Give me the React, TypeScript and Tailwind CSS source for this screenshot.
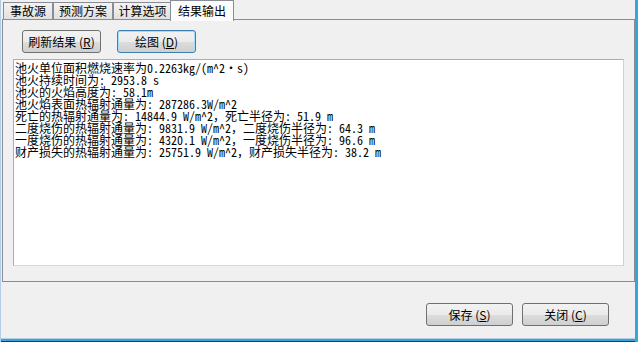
import React from "react";

const lines = [
  "池火单位面积燃烧速率为0.2263kg/(m^2·s)",
  "池火持续时间为: 2953.8 s",
  "池火的火焰高度为: 58.1m",
  "池火焰表面热辐射通量为: 287286.3W/m^2",
  "死亡的热辐射通量为: 14844.9 W/m^2，死亡半径为: 51.9 m",
  "二度烧伤的热辐射通量为: 9831.9 W/m^2，二度烧伤半径为: 64.3 m",
  "一度烧伤的热辐射通量为: 4320.1 W/m^2，一度烧伤半径为: 96.6 m",
  "财产损失的热辐射通量为: 25751.9 W/m^2，财产损失半径为: 38.2 m",
];

const uiFont = { fontFamily: '"Noto Sans CJK SC", "Liberation Sans", sans-serif' };
const monoFont = {
  fontFamily: '"Noto Sans Mono CJK SC", "Noto Sans CJK SC", monospace',
};

function Tab({ label, w, selected }: { label: string; w: string; selected?: boolean }) {
  if (selected) {
    return (
      <div
        className={`${w} h-[21px] -ml-[2px] -mb-[1px] relative z-10 flex items-center justify-center border border-b-0 border-[#898c95] bg-[#fcfcfc] text-[12px] text-black`}
      >
        {label}
      </div>
    );
  }
  return (
    <div
      className={`${w} h-[17px] mt-[2px] flex items-center justify-center border border-b-0 border-[#898c95] bg-gradient-to-b from-[#f3f3f3] to-[#e0e0e0] text-[12px] text-black`}
    >
      {label}
    </div>
  );
}

function Btn({
  children,
  w,
  focused,
}: {
  children: React.ReactNode;
  w: string;
  focused?: boolean;
}) {
  return (
    <div
      className={`${w} h-[23px] rounded-[3px] border ${
        focused ? "border-[#3c7fb1] shadow-[inset_0_0_0_1px_#a6dcf6]" : "border-[#707070]"
      } flex items-center justify-center text-[12px] text-black bg-[linear-gradient(to_bottom,#f2f2f2_0%,#ebebeb_50%,#dddddd_51%,#cfcfcf_100%)]`}
    >
      {children}
    </div>
  );
}

export default function App() {
  return (
    <div
      className="w-[638px] h-[342px] bg-[#f0f0f0] flex flex-col overflow-hidden border-l border-l-[#b4cde6] border-r-[3px] border-r-[#39a3dc]"
      style={uiFont}
    >
      <div className="flex-1 flex flex-col pl-[1px]">
        {/* tabs */}
        <div className="flex items-start h-[19px] pl-[1px]">
          <Tab label="事故源" w="w-[50px]" />
          <Tab label="预测方案" w="w-[60px]" />
          <Tab label="计算选项" w="w-[59px]" />
          <Tab label="结果输出" w="w-[64px]" selected />
        </div>
        {/* panel */}
        <div className="w-[633px] h-[263px] border border-[#898c95] bg-[#f0f0f0] flex flex-col">
          <div className="flex gap-[16px] pl-[19px] pt-[10px]">
            <Btn w="w-[79px]">
              刷新结果 (<span className="underline">R</span>)
            </Btn>
            <Btn w="w-[79px]" focused>
              绘图 (<span className="underline">D</span>)
            </Btn>
          </div>
          <div className="ml-[10px] mt-[6px] w-[611px] h-[207px] bg-white border border-t-[#abadb3] border-l-[#abadb3] border-r-[#b9d7f0] border-b-[#c5dcef] pl-[1px] pt-[2px]">
            {lines.map((l, i) => (
              <div key={i} className="text-[12px] leading-[12px] text-black whitespace-pre" style={monoFont}>
                {l}
              </div>
            ))}
          </div>
        </div>
        {/* bottom buttons */}
        <div className="flex justify-end gap-[9px] pr-[26px] pt-[21px]">
          <Btn w="w-[87px]">
            保存 (<span className="underline">S</span>)
          </Btn>
          <Btn w="w-[87px]">
            关闭 (<span className="underline">C</span>)
          </Btn>
        </div>
      </div>
      <div className="h-[1px] bg-[#b4cde6]" />
      <div className="h-[2px] bg-[#39a3dc]" />
      <div className="h-[1px] bg-[#1d3b5a]" />
    </div>
  );
}
